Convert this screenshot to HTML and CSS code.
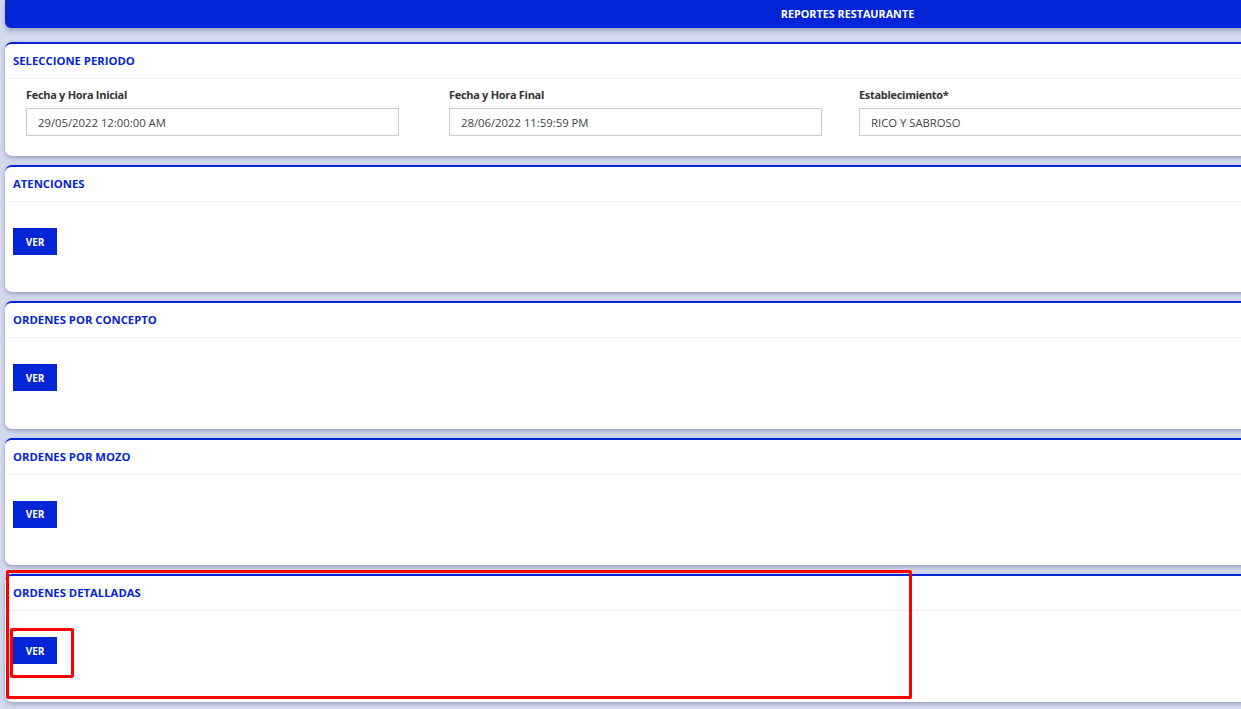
FILE: index.html
```html
<!DOCTYPE html>
<html lang="es">
<head>
    <meta charset="UTF-8">
    <meta name="viewport" content="width=device-width, initial-scale=1.0">
    <title>Reportes Restaurante</title>
    <link rel="stylesheet" href="styles.css">
</head>
<body>
    <div class="page">
        <div class="topbar">REPORTES RESTAURANTE</div>

        <section class="card">
            <div class="card-head">SELECCIONE PERIODO</div>
            <div class="card-body period">
                <div class="field">
                    <label for="desde">Fecha y Hora Inicial</label>
                    <input type="text" id="desde" value="29/05/2022 12:00:00 AM">
                </div>
                <div class="field">
                    <label for="hasta">Fecha y Hora Final</label>
                    <input type="text" id="hasta" value="28/06/2022 11:59:59 PM">
                </div>
                <div class="field wide">
                    <label for="local">Establecimiento*</label>
                    <input type="text" id="local" value="RICO Y SABROSO">
                </div>
            </div>
        </section>

        <section class="card">
            <div class="card-head">ATENCIONES</div>
            <div class="card-body"><button class="btn">VER</button></div>
        </section>

        <section class="card">
            <div class="card-head">ORDENES POR CONCEPTO</div>
            <div class="card-body"><button class="btn">VER</button></div>
        </section>

        <section class="card">
            <div class="card-head">ORDENES POR MOZO</div>
            <div class="card-body"><button class="btn">VER</button></div>
        </section>

        <section class="card marked">
            <div class="card-head">ORDENES DETALLADAS</div>
            <div class="card-body"><button class="btn">VER</button></div>
            <div class="mark mark-card"></div>
            <div class="mark mark-btn"></div>
        </section>
    </div>
</body>
</html>
```

FILE: styles.css
```css
:root {
    --blue: #0325d6;
    --page-bg: #d3daee;
    --text-color: #333333;
}

* {
    box-sizing: border-box;
    font-family: "Open Sans", Arial, sans-serif;
}

body {
    margin: 0;
    background-color: var(--page-bg);
    overflow: hidden;
}

.page {
    width: 1690px;
    padding-left: 5px;
}

.topbar {
    height: 28px;
    line-height: 28px;
    background-color: var(--blue);
    color: #ffffff;
    font-size: 10.8px;
    font-weight: 700;
    text-align: center;
    border-radius: 0 0 6px 6px;
    box-shadow: 0 3px 5px rgba(40, 50, 110, 0.3);
    margin-bottom: 14px;
}

.card {
    position: relative;
    background-color: #ffffff;
    border-top: 2px solid var(--blue);
    border-radius: 7px;
    box-shadow: 0 2px 4px rgba(40, 50, 110, 0.35);
    margin-bottom: 9px;
}

.card-head {
    height: 35px;
    line-height: 34px;
    padding-left: 8px;
    border-bottom: 1px solid #eeeeee;
    color: var(--blue);
    font-size: 11.3px;
    font-weight: 700;
}

.card-body {
    padding: 26px 8px 37.4px;
}

.period {
    display: grid;
    grid-template-columns: 423px 410px 1fr;
    padding: 8px 21px 20px;
}

.field label {
    display: block;
    font-size: 11px;
    line-height: 15px;
    font-weight: 700;
    color: var(--text-color);
    margin-bottom: 6px;
    letter-spacing: -0.3px;
}

.field input {
    width: 373px;
    height: 28px;
    padding: 0 11px;
    border: 1px solid #c9ccd3;
    border-radius: 0;
    font-size: 11.3px;
    color: #444444;
}

.field.wide input {
    width: 420px;
}

.btn {
    display: block;
    width: 44px;
    height: 27px;
    background-color: var(--blue);
    color: #ffffff;
    border: none;
    font-size: 10px;
    font-weight: 700;
    padding: 0;
    cursor: pointer;
}

/* red highlight frames drawn over the last card */
.mark {
    position: absolute;
    border: 3px solid #ff0000;
    border-radius: 2px;
}

.mark-card {
    left: 1px;
    top: -6px;
    width: 906px;
    height: 129px;
}

.mark-btn {
    left: 5px;
    top: 52px;
    width: 64px;
    height: 50px;
}
```
